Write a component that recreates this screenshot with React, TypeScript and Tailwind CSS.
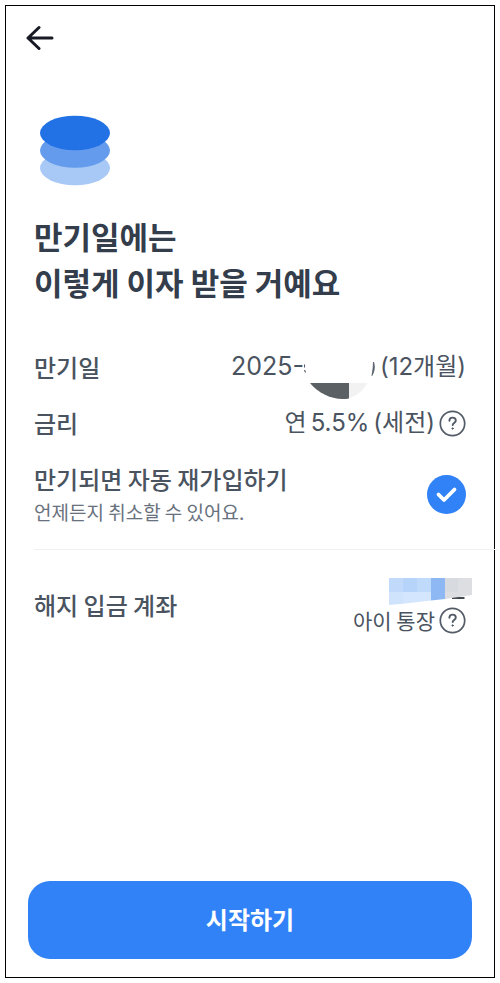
import React, { useState } from 'react';

function HelpIcon({ label }: { label: string }) {
  return (
    <button type="button" aria-label={label} className="shrink-0 text-[#525b66]">
      <svg width="27" height="27" viewBox="0 0 27 27" fill="none" stroke="currentColor" strokeLinecap="round" strokeLinejoin="round">
        <circle cx="13.5" cy="13.5" r="12.2" strokeWidth="1.7" />
        <path d="M10.4 10.800c0-2 1.300-3.200 3.200-3.200s3.200 1.200 3.200 2.900c0 2.400-3.100 2.500-3.100 4.500" strokeWidth="1.9" />
        <circle cx="13.6" cy="18.5" r="0.7" fill="currentColor" strokeWidth="0.9" />
      </svg>
    </button>
  );
}

function CoinStack() {
  return (
    <svg width="72" height="72" viewBox="0 0 72 72" aria-hidden="true">
      <ellipse cx="36" cy="53" rx="35" ry="17.3" fill="#a8c8f6" />
      <ellipse cx="36" cy="35.5" rx="35" ry="17.3" fill="#649bec" />
      <ellipse cx="36" cy="18" rx="35" ry="17.3" fill="#2272e6" />
    </svg>
  );
}

// hides month and day of the maturity date
function DateMask() {
  return (
    <svg width="72" height="66" viewBox="0 0 72 66" aria-hidden="true" className="-my-4">
      <path d="M0.500 30.500v3M0.500 36l1 2.500" stroke="#525b66" strokeWidth="1.100" />
      <path d="M69.500 28c1.400 4 1.200 9-1.500 13.500 0.800-4.500 1.500-9 1.500-13.500z" fill="#525b66" stroke="#525b66" strokeWidth="0.800" />
      <path d="M6 49h39v15.500C30 67 15 60 6 49z" fill="#5a6064" />
      <path d="M45 49h18.500c-5 8-10.500 13-18.500 15z" fill="#f2f2f3" />
    </svg>
  );
}

function AccountMask() {
  return (
    <svg width="83" height="27" viewBox="0 0 83 27" aria-hidden="true">
      <path d="M63 19h12.500v2H63z" fill="#444a52" />
      <path d="M0 0h14v14H0z" fill="#c1dafb" />
      <path d="M14 0h14v14H14z" fill="#b6d3fa" />
      <path d="M28 0h14v14H28z" fill="#bfdafb" />
      <path d="M42 0h14v21L42 22.500z" fill="#8eb8f4" />
      <path d="M56 0h27v17L56 21z" fill="#dcdee2" />
      <path d="M56 0h13v14H56z" fill="#d7dade" />
      <path d="M0 14h14v11.700L0 27z" fill="#d0e3fc" />
      <path d="M14 14h28v8.500L14 25.700z" fill="#d3e6fd" />
    </svg>
  );
}

export default function App() {
  const [renew, setRenew] = useState(true);

  return (
    <div className="flex min-h-screen flex-col bg-white p-[5px] font-['Noto_Sans_CJK_KR',sans-serif] text-[#4a5360]">
      <div className="flex flex-1 flex-col border border-black">
        <header className="flex h-16 items-center px-5">
          <button type="button" aria-label="뒤로" className="text-[#171a24]">
            <svg width="28" height="26" viewBox="0 0 28 26" fill="none" stroke="currentColor" strokeWidth="3" strokeLinecap="round" strokeLinejoin="round">
              <path d="M26 13H2M13 2.500L2 13l11 10.500" />
            </svg>
          </button>
        </header>

        <main className="flex-1 px-7 pt-[45px]">
          <div className="pl-[5px]">
            <CoinStack />
          </div>
          <h1 className="mt-[26px] text-[31px] leading-[46px] font-bold text-[#333d4b]">
            만기일에는
            <br />
            이렇게 이자 받을 거예요
          </h1>

          <dl className="mt-[34px] text-2xl">
            <div className="flex h-14 items-center justify-between">
              <dt className="font-medium">만기일</dt>
              <dd className="flex items-center font-['Inter','Noto_Sans_CJK_KR',sans-serif]">
                <span className="text-[25px]">2025-</span>
                <DateMask />
                <span className="ml-1">(12개월)</span>
              </dd>
            </div>
            <div className="flex h-14 items-center justify-between">
              <dt className="font-medium">금리</dt>
              <dd className="flex items-center gap-1 font-['Inter','Noto_Sans_CJK_KR',sans-serif]">
                <span>연</span>
                <span>5.5%</span>
                <span>(세전)</span>
                <HelpIcon label="금리 안내" />
              </dd>
            </div>
          </dl>

          <label className="mt-2.5 flex items-center justify-between">
            <span className="flex flex-col">
              <span className="text-2xl leading-9 font-medium">만기되면 자동 재가입하기</span>
              <span className="text-[19px] leading-[30px] text-[#68717d]">언제든지 취소할 수 있어요.</span>
            </span>
            <span className="relative size-[39px] shrink-0">
              <input
                type="checkbox"
                checked={renew}
                onChange={e => setRenew(e.target.checked)}
                className="block size-[39px] appearance-none rounded-full bg-gray-300 checked:bg-[#3182f6]"
              />
              <svg viewBox="0 0 39 39" fill="none" className="pointer-events-none absolute inset-0" aria-hidden="true">
                <path d="M11.500 19.500l5.500 5.500L27.500 14.500" stroke="white" strokeWidth="3.800" strokeLinecap="round" strokeLinejoin="round" />
              </svg>
            </span>
          </label>

          <hr className="mt-[22px] -mr-8 border-[#f0f1f3]" />

          <div className="mt-7 flex items-center justify-between">
            <span className="pb-1 text-2xl font-medium">해지 입금 계좌</span>
            <div className="flex flex-col items-end">
              <div className="-mr-1.5">
                <AccountMask />
              </div>
              <div className="flex items-center gap-1 text-[21px] leading-[30px]">
                <span>아이 통장</span>
                <HelpIcon label="입금 계좌 안내" />
              </div>
            </div>
          </div>
        </main>

        <footer className="px-[22px] pb-[18px]">
          <button type="button" className="h-[78px] w-full rounded-[22px] bg-[#3182f6] pb-0.5 text-2xl font-bold text-white">
            시작하기
          </button>
        </footer>
      </div>
    </div>
  );
}
